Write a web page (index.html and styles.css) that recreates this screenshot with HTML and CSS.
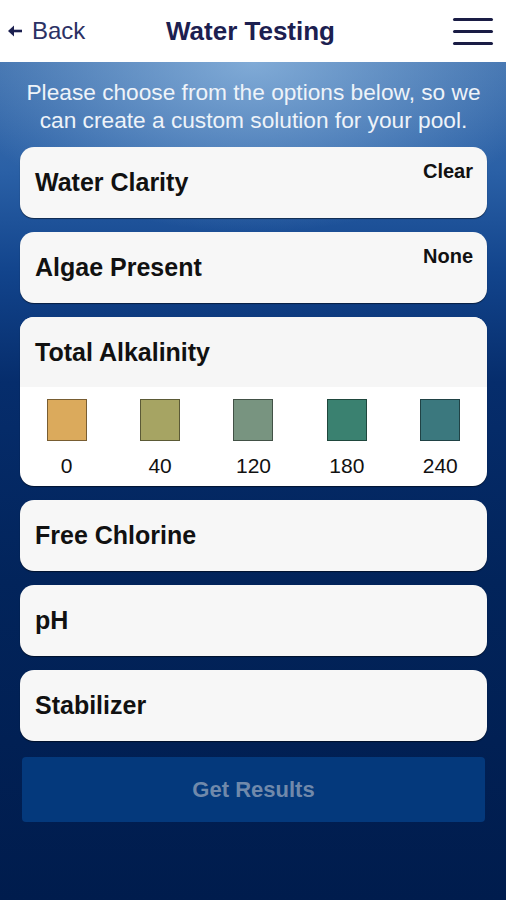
FILE: index.html
```html
<!DOCTYPE html>
<html lang="en">
<head>
  <meta charset="UTF-8">
  <meta name="viewport" content="width=device-width, initial-scale=1.0">
  <title>Water Testing</title>
  <link rel="stylesheet" href="styles.css">
</head>
<body>
  <div class="header">
    <a class="back" href="#">
      <svg width="15" height="12" viewBox="0 0 15 12">
        <path d="M14 6H3" fill="none" stroke="#1c2050" stroke-width="2.6"/>
        <path d="M0 6L6 0.5V11.5Z" fill="#1c2050"/>
      </svg>
      Back
    </a>
    <h1 class="title">Water Testing</h1>
    <div class="menu">
      <span></span>
      <span></span>
      <span></span>
    </div>
  </div>

  <div class="main">
    <p class="intro">Please choose from the options below, so we can create a custom solution for your pool.</p>

    <div class="card">
      <span class="card-title">Water Clarity</span>
      <span class="card-value">Clear</span>
    </div>

    <div class="card">
      <span class="card-title">Algae Present</span>
      <span class="card-value">None</span>
    </div>

    <div class="card open">
      <div class="card-head">
        <span class="card-title">Total Alkalinity</span>
      </div>
      <div class="swatches">
        <div class="swatch"><div class="chip" style="background:#dbaa5c"></div>0</div>
        <div class="swatch"><div class="chip" style="background:#a6a463"></div>40</div>
        <div class="swatch"><div class="chip" style="background:#789480"></div>120</div>
        <div class="swatch"><div class="chip" style="background:#3a8170"></div>180</div>
        <div class="swatch"><div class="chip" style="background:#3b787e"></div>240</div>
      </div>
    </div>

    <div class="card">
      <span class="card-title">Free Chlorine</span>
    </div>

    <div class="card">
      <span class="card-title">pH</span>
    </div>

    <div class="card">
      <span class="card-title">Stabilizer</span>
    </div>

    <button class="results">Get Results</button>
  </div>
</body>
</html>
```

FILE: styles.css
```css
/* Page */
body {
  margin: 0;
  width: 506px;
  height: 900px;
  overflow: hidden;
  font-family: "Liberation Sans", Arial, sans-serif;
  background-color: #001c4d;
}

/* Top bar */
.header {
  height: 62px;
  background-color: #fff;
  display: flex;
  align-items: center;
  justify-content: space-between;
  padding: 0 13px 0 8px;
}

.back {
  display: flex;
  align-items: center;
  gap: 9px;
  width: 120px;
  font-size: 24px;
  color: #2b3164;
  text-decoration: none;
}

.title {
  margin: 0;
  font-size: 26px;
  font-weight: bold;
  color: #1c2050;
}

.menu {
  width: 120px;
  display: flex;
  flex-direction: column;
  align-items: flex-end;
  gap: 9px;
}

.menu span {
  display: block;
  width: 40px;
  height: 3px;
  border-radius: 2px;
  background-color: #1a1d45;
}

/* Blue area */
.main {
  height: 838px;
  box-sizing: border-box;
  padding: 16px 19px 0 20px;
  display: flex;
  flex-direction: column;
  gap: 14px;
  background:
    radial-gradient(ellipse 300px 170px at 50% 0, rgba(150, 190, 228, 0.75), rgba(150, 190, 228, 0) 100%),
    linear-gradient(to bottom, #3f70ad 0, #2a60a6 110px, #12448c 210px, #062d6c 320px, #02245b 520px, #001c4d 838px);
}

.intro {
  margin: 0 0 -1px;
  text-align: center;
  font-size: 22.7px;
  line-height: 28px;
  color: #eef3f9;
}

/* Option cards */
.card {
  height: 71px;
  display: flex;
  align-items: center;
  justify-content: space-between;
  padding: 0 14px 0 15px;
  background-color: #f7f7f7;
  border-radius: 14px;
  box-shadow: 0 1px 1px rgba(0, 0, 0, 0.5);
}

.card-title {
  font-size: 25px;
  font-weight: bold;
  color: #111;
}

.card-value {
  align-self: flex-start;
  margin-top: 13px;
  font-size: 20px;
  font-weight: bold;
  color: #111;
}

.card.open {
  height: auto;
  display: block;
  padding: 0;
  overflow: hidden;
  background-color: #fff;
}

.card-head {
  height: 70px;
  display: flex;
  align-items: center;
  padding-left: 15px;
  background-color: #f6f6f6;
}

.swatches {
  display: grid;
  grid-template-columns: repeat(5, 1fr);
  padding: 12px 0 8px;
}

.swatch {
  display: flex;
  flex-direction: column;
  align-items: center;
  gap: 13px;
  font-size: 21px;
  color: #111;
}

.chip {
  width: 40px;
  height: 42px;
  box-sizing: border-box;
  border: 1px solid rgba(0, 0, 0, 0.45);
}

/* Bottom button */
.results {
  margin: 2px 2px 0;
  height: 65px;
  border: none;
  border-radius: 4px;
  background-color: #04397c;
  color: #7089ab;
  font-family: "Liberation Sans", Arial, sans-serif;
  font-size: 22px;
  font-weight: bold;
}
```
